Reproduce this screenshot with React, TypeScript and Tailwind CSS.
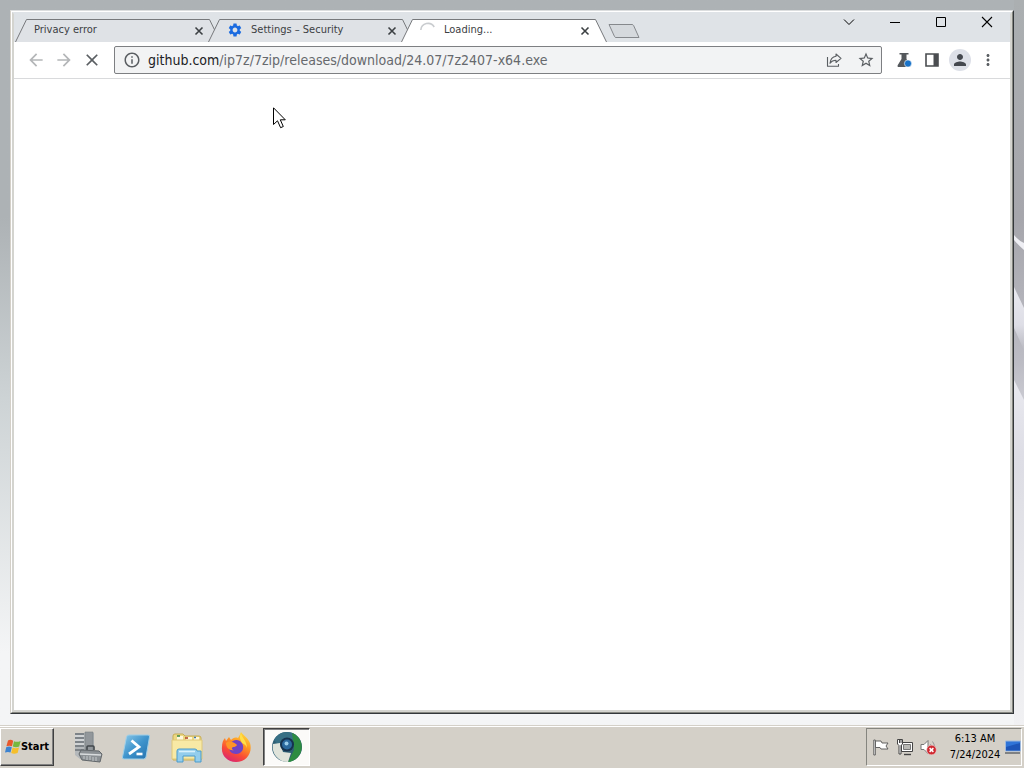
import React from "react";
import {
  MdArrowBack,
  MdArrowForward,
  MdClose,
  MdInfoOutline,
  MdMoreVert,
  MdPerson,
  MdSettings,
  MdStarBorder,
} from "react-icons/md";

type TabProps = {
  title: string;
  icon?: React.ReactNode;
  active?: boolean;
};

const Tab = ({ title, icon, active }: TabProps) => {
  return (
    <div className="relative -mr-3.5 flex h-6 w-[207px] items-center pr-[15px] pl-[19px]">
      <svg
        className="absolute inset-0 h-full w-full"
        viewBox="0 0 207 24"
        preserveAspectRatio="none"
      >
        <path
          d="M0.5 24 L11.5 1.5 H194.5 L205.5 24"
          fill={active ? "#ffffff" : "#dfe2e6"}
          stroke="#77797c"
        />
      </svg>
      {icon && <span className="relative mr-2 w-4">{icon}</span>}
      <span className="relative flex-1 truncate text-[11px] leading-4 text-[#3c4043]">
        {title}
      </span>
      <button aria-label={`Close ${title}`} className="relative text-[#3c4043]">
        <svg className="size-4" viewBox="0 0 16 16" stroke="currentColor" strokeWidth="1.6">
          <path d="M4.5 5.5 L11.5 12.5 M11.5 5.5 L4.5 12.5" />
        </svg>
      </button>
    </div>
  );
};

const Spinner = () => (
  <svg className="size-4" viewBox="0 0 16 16" fill="none" stroke="#c9cccf" strokeWidth="1.6">
    <path d="M0.8 8 A7.2 7.2 0 0 1 14.2 5" />
  </svg>
);

const WindowControls = () => {
  return (
    <div className="flex h-4 text-black">
      <button aria-label="Search tabs" className="flex w-[46px] items-center justify-center">
        <svg className="size-3" viewBox="0 0 12 12" fill="none" stroke="currentColor">
          <path d="M1 3.5 L6 8.5 L11 3.5" />
        </svg>
      </button>
      <button aria-label="Minimize" className="flex w-[46px] items-center justify-center">
        <svg className="size-3" viewBox="0 0 12 12" stroke="currentColor">
          <path d="M1 6.5 H11" />
        </svg>
      </button>
      <button aria-label="Maximize" className="flex w-[46px] items-center justify-center">
        <svg className="size-3" viewBox="0 0 12 12" fill="none" stroke="currentColor">
          <path d="M1.5 1.5 H10.5 V10.5 H1.5 Z" />
        </svg>
      </button>
      <button aria-label="Close" className="flex w-[46px] items-center justify-center">
        <svg className="size-3" viewBox="0 0 12 12" stroke="currentColor" strokeWidth="1.1">
          <path d="M1 1 L11 11 M11 1 L1 11" />
        </svg>
      </button>
    </div>
  );
};

const TabStrip = () => {
  return (
    <div className="flex h-7 justify-between bg-[#dfe3e7]">
      <div className="flex items-end pl-px">
        <Tab title="Privacy error" />
        <Tab title="Settings – Security" icon={<MdSettings className="size-4 text-[#1a6be0]" />} />
        <Tab title="Loading..." icon={<Spinner />} active />
        <button aria-label="New tab" className="ml-3.5 mb-1">
          <svg
            className="h-3.5 w-8"
            viewBox="0 0 32 14"
            fill="#d5d9dd"
            stroke="#85888c"
            strokeLinejoin="round"
          >
            <path d="M1 0.5 H24 Q25 0.5 25.6 1.5 L31 13.5 H8 Q7 13.5 6.5 12.5 Z" />
          </svg>
        </button>
      </div>
      <WindowControls />
    </div>
  );
};

const Toolbar = () => {
  return (
    <div className="flex h-[37px] items-center border-b border-[#d9dadc] pr-2 pl-2 text-[#5a5e62]">
      <button aria-label="Back" className="flex w-7 justify-center text-[#b4b6b8]">
        <MdArrowBack className="size-5" />
      </button>
      <button aria-label="Forward" className="flex w-7 justify-center text-[#b4b6b8]">
        <MdArrowForward className="size-5" />
      </button>
      <button aria-label="Stop" className="flex w-7 justify-center">
        <MdClose className="size-5" />
      </button>
      <div className="ml-2 flex h-7 flex-1 items-center rounded-xs border border-[#7d7f82] bg-[#f2f3f4] pr-1.5 pl-2">
        <MdInfoOutline className="size-[18px]" />
        <div className="relative ml-[7px] h-5 flex-1 text-sm leading-5">
          <input
            aria-label="Address"
            className="w-full bg-transparent text-transparent caret-transparent outline-none"
            defaultValue="github.com/ip7z/7zip/releases/download/24.07/7z2407-x64.exe"
          />
          <div aria-hidden="true" className="pointer-events-none absolute inset-0 truncate text-[#66696d]">
            <span className="text-[#202124]">github.com</span>
            /ip7z/7zip/releases/download/24.07/7z2407-x64.exe
          </div>
        </div>
        <button aria-label="Share" className="mr-[15px]">
          <svg
            className="size-4"
            viewBox="0 0 16 16"
            fill="none"
            stroke="currentColor"
            strokeWidth="1.1"
            strokeLinejoin="round"
          >
            <path d="M1.5 5 V14.3 H12.5 V12" />
            <path d="M10 2 L15 6.3 L10 10.5 V8.3 C7.5 8.3 5.6 9 4 11.3 C4.4 7.5 6.5 4.8 10 4.3 Z" />
          </svg>
        </button>
        <button aria-label="Bookmark">
          <MdStarBorder className="size-[18px]" />
        </button>
      </div>
      <div className="ml-2 flex">
        <button aria-label="Experiments" className="flex w-7 items-center justify-center">
          <svg className="size-4" viewBox="0 0 16 16">
            <path d="M3.5 1 H12.5 V2.6 H10.5 V7 L14 13 Q14.6 15 13 15 H3 Q0.8 15 1.8 13 L5.5 7 V2.6 H3.5 Z" fill="#54585c" />
            <circle cx="12" cy="11.5" r="3.6" fill="#1a73c8" stroke="#fff" strokeWidth="0.6" />
          </svg>
        </button>
        <button aria-label="Side panel" className="flex w-7 items-center justify-center">
          <svg className="size-4" viewBox="0 0 16 16">
            <path d="M2 2 H14 V14 H2 Z" fill="none" stroke="#4a4d50" strokeWidth="1.6" />
            <path d="M9.5 2 H14 V14 H9.5 Z" fill="#4a4d50" />
          </svg>
        </button>
        <button aria-label="Profile" className="flex w-7 items-center justify-center">
          <span className="flex size-[22px] items-center justify-center rounded-full bg-[#dde0e8] text-[#44484f]">
            <MdPerson className="size-[18px]" />
          </span>
        </button>
        <button aria-label="Menu" className="flex w-7 items-center justify-center">
          <MdMoreVert className="size-[18px]" />
        </button>
      </div>
    </div>
  );
};

const MouseCursor = () => (
  <svg className="absolute top-[93px] left-[259px] h-6 w-4" viewBox="0 0 16 24" fill="#fff" stroke="#000">
    <path d="M0.5 0.8 V17.5 L4.5 13.8 L7.6 20.7 L10.3 19.5 L7.3 12.8 H12.3 Z" />
  </svg>
);

const BrowserWindow = () => {
  return (
    <div className="relative flex flex-1 flex-col border border-t-[#dcdedf] border-r-[#33373a] border-b-[#33373a] border-l-[#d4d0c8]">
      <div className="flex flex-1 flex-col border border-t-white border-r-[#85867f] border-b-[#85867f] border-l-white">
        <div className="flex flex-1 flex-col border-2 border-[#d4d4cf] border-t-[#dfe3e7] bg-white">
          <div className="relative flex flex-1 flex-col">
            <TabStrip />
            <Toolbar />
            <main className="flex-1 bg-white" />
            <MouseCursor />
          </div>
        </div>
      </div>
    </div>
  );
};

// light streaks of the wallpaper, visible right of the window
const WallpaperStreaks = () => (
  <svg
    className="absolute inset-y-0 right-0 h-full w-2.5"
    viewBox="0 0 10 725"
    preserveAspectRatio="none"
  >
    <defs>
      <linearGradient id="base" x1="0" y1="0" x2="0" y2="1">
        <stop offset="0" stopColor="#abafb1" />
        <stop offset="0.3" stopColor="#a6a6ac" />
        <stop offset="0.5" stopColor="#bcbcc4" />
        <stop offset="0.62" stopColor="#dcdce3" />
        <stop offset="1" stopColor="#f1f1f3" />
      </linearGradient>
      <linearGradient id="streak" x1="0" y1="0" x2="0" y2="1">
        <stop offset="0" stopColor="#e9e9ef" />
        <stop offset="0.6" stopColor="#dedee6" />
        <stop offset="1" stopColor="#dedee6" stopOpacity="0" />
      </linearGradient>
    </defs>
    <path d="M0 0 H10 V725 H0 Z" fill="url(#base)" />
    <path d="M0 235 Q5 241 10 243 V250 Q5 246 0 240 Z" fill="#efeff4" />
    <path d="M0 287 L10 308 V350 L0 328 Z" fill="url(#streak)" />
    <path d="M0 380 L10 400 V500 H0 Z" fill="url(#streak)" />
  </svg>
);

const ServerManagerIcon = () => (
  <svg className="size-8" viewBox="0 0 32 32">
    <path d="M3 2 H22 V23 L17 28 H8 L3 24 Z" fill="#b4b8bb" />
    <path d="M13 1 H21 V21 H13 Z" fill="#92979b" stroke="#777c80" strokeWidth="0.6" />
    <path d="M3 3 H12 M3 7 H12 M3 11 H12 M3 15 H12 M3 19 H12" stroke="#7d8388" strokeWidth="2" />
    <path d="M3 5 H12 M3 9 H12 M3 13 H12" stroke="#eceeef" />
    <path d="M15 19 V16 Q15 15 16 15 H21 Q22 15 22 16 V19" fill="none" stroke="#43484c" strokeWidth="1.6" />
    <path d="M9 19 L27 20 L30 23 L28 31 L10 29 L7 23 Z" fill="#8b9094" stroke="#62676b" />
    <path d="M8 23 L29 24" stroke="#d9dcde" strokeWidth="1.4" />
    <path d="M12 25 V28 M15 25 V29 M18 25 V29 M21 26 V30 M24 26 V30" stroke="#c5c9cb" />
  </svg>
);

const PowerShellIcon = () => (
  <svg className="size-8" viewBox="0 0 32 32">
    <defs>
      <linearGradient id="ps" x1="0" y1="0" x2="1" y2="1">
        <stop offset="0" stopColor="#8ccaea" />
        <stop offset="0.5" stopColor="#3f94cc" />
        <stop offset="1" stopColor="#2470ad" />
      </linearGradient>
    </defs>
    <path
      d="M8 4 H27 Q29 4 28.5 6 L25 26 Q24.6 28 22.5 28 H3 Q1 28 1.5 26 L5.5 6 Q6 4 8 4 Z"
      fill="url(#ps)"
      stroke="#9fcfe8"
    />
    <path d="M10.5 9.5 L18 16 L8 23" fill="none" stroke="#fff" strokeWidth="2.8" />
    <path d="M15.5 23 H21.5" stroke="#fff" strokeWidth="2.6" />
  </svg>
);

const ExplorerIcon = () => (
  <svg className="size-8" viewBox="0 0 32 32">
    <path d="M2 5 Q2 3 4 3 H12 L14 5 H28 Q30 5 30 7 V29 H2 Z" fill="#ecd883" stroke="#c7ad55" />
    <path d="M6 5 H12 V9 H6 Z M15 6 H21 V9 H15 Z M23 6 H28 V9 H23 Z" fill="#fff8dc" />
    <path d="M6 5 H9" stroke="#3f8b45" strokeWidth="1.6" />
    <path d="M14 7 H17" stroke="#b5492c" strokeWidth="1.6" />
    <path d="M23 6.5 H25" stroke="#3b77b5" strokeWidth="1.6" />
    <path d="M1 9 H31 V28 H1 Z" fill="#f8e9a5" stroke="#dfc878" />
    <path
      d="M6 31 V20 Q6 18 8 18 H24 Q26 18 26 20 H30 V31 H24 V25 H12 V31 Z"
      fill="#93cdec"
      stroke="#4a9bcb"
    />
    <path d="M8 20.5 H24" stroke="#d9f1fc" strokeWidth="1.6" />
  </svg>
);

const FirefoxIcon = () => (
  <svg className="size-8" viewBox="0 0 32 32">
    <defs>
      <linearGradient id="fox" x1="0.8" y1="0" x2="0.3" y2="1">
        <stop offset="0" stopColor="#ffdf3d" />
        <stop offset="0.4" stopColor="#ff9324" />
        <stop offset="0.7" stopColor="#fa4b36" />
        <stop offset="1" stopColor="#d92672" />
      </linearGradient>
    </defs>
    <path
      d="M21 1 C23 4 28 7 30 12 C33 22 26 31 16 31 C7 31 1 24 2 16 C2 12 3 9 5 7 L6 10 L9 6 L11 9 C13 7 15 6 18 7 C19 5 20 4 21 1 Z"
      fill="url(#fox)"
    />
    <path d="M10 13 C13 8 19 8 22 12 C25 17 22 23 16 23 C12 23 9 20 9 17 Z" fill="#7044c4" />
    <path d="M6 12 C9 9 13 11 16 13 C18 14 16 16 13 16 C11 17 12 19 14 19 C10 20 6 17 6 12 Z" fill="#ff9527" />
    <path d="M21 2 C22 7 27 10 27 17 C26 14 24 13 22 12 C20 8 19 6 21 2 Z" fill="#ffe04a" />
  </svg>
);

const ChromiumIcon = () => (
  <svg className="size-8" viewBox="0 0 32 32">
    <circle cx="16" cy="16" r="15" fill="#2e5f74" />
    <path d="M16 1 A15 15 0 0 1 30 11 H17 L8 15 L3 9 A15 15 0 0 1 16 1 Z" fill="#376f84" />
    <path d="M21 2 A15 15 0 0 1 17 31 L23 19 L22 9 Z" fill="#2d8b42" />
    <path d="M2 13 L9 12 L12 21 L20 22 L17 31 A15 15 0 0 1 2 13 Z" fill="#dfe3da" />
    <circle cx="16" cy="13.5" r="7" fill="#16324f" />
    <circle cx="16" cy="13.5" r="5" fill="#2b689d" />
    <circle cx="15.5" cy="12.5" r="2" fill="#9accea" />
  </svg>
);

const WindowsFlag = () => (
  <svg className="size-4" viewBox="0 0 16 16">
    <path d="M3 1.5 Q5.5 0 8.2 1.8 L7 7.3 Q4.5 6 1.4 7.3 Z" fill="#e8582b" />
    <path d="M9 2.2 Q12 3.6 15.6 2 L14.2 7.6 Q11 9 7.8 7.6 Z" fill="#76b83f" />
    <path d="M1.2 8.2 Q4.3 7 6.8 8.3 L5.5 13.6 Q3 12.2 0 13.6 Z" fill="#3d83d0" />
    <path d="M7.6 8.6 Q10.6 9.9 14 8.5 L12.6 14 Q9 15.4 6.2 14 Z" fill="#f5bf2c" />
  </svg>
);

const Tray = () => {
  return (
    <div className="mr-0.5 flex items-center border border-t-[#85857f] border-r-white border-b-white border-l-[#85857f] pl-1">
      <button aria-label="Action Center" className="w-6">
        <svg className="size-5" viewBox="0 0 20 20" fill="#fff" stroke="#555" strokeWidth="0.9">
          <path d="M4.5 4 H10 L11 6 H17 L15 9 L17 12 H10 L9 10.5 H4.5 Z" />
          <path d="M2.8 3 H4.3 V18 H2.8 Z" />
        </svg>
      </button>
      <button aria-label="Network" className="w-6">
        <svg className="size-5" viewBox="0 0 20 20" fill="#fff" stroke="#444">
          <path d="M6.5 5.5 H17.5 V14.5 H6.5 Z" />
          <path d="M8.5 7.5 H15.5 V12.5 H8.5 Z" fill="#b9b9b5" stroke="#777" />
          <path d="M9 17.5 H16" strokeWidth="1.4" />
          <path d="M2.5 2.5 H7.5 V7 L6 8.5 V17 H4 V8.5 L2.5 7 Z" />
          <path d="M4.5 2 V6 M6 2 V6" />
        </svg>
      </button>
      <button aria-label="Volume" className="w-6">
        <svg className="size-5" viewBox="0 0 20 20">
          <path d="M2 7.5 H5 L9 3.5 V16.5 L5 12.5 H2 Z" fill="#fff" stroke="#777" />
          <path d="M11.5 7 Q13 10 11.5 13 M13.5 4.5 Q15.5 7 15.5 10" fill="none" stroke="#999" />
          <circle cx="12.5" cy="13" r="4.8" fill="#cf2830" stroke="#f3c9c9" strokeWidth="0.6" />
          <path d="M10.6 11.1 L14.4 14.9 M14.4 11.1 L10.6 14.9" stroke="#fff" strokeWidth="1.5" />
        </svg>
      </button>
      <div className="ml-1 w-14 text-center text-[11px] leading-4 text-black">
        <div>6:13 AM</div>
        <div>7/24/2024</div>
      </div>
      <button aria-label="Show desktop" className="ml-0.5">
        <svg className="h-5 w-4" viewBox="0 0 16 20">
          <path d="M0.5 4 H15.5 V14 H0.5 Z" fill="#2f74d8" stroke="#9db8dc" />
          <path d="M1 10 L15 6 V13.5 H1 Z" fill="#1d55b8" />
          <path d="M0 16 H15" stroke="#65686c" strokeWidth="1.5" />
        </svg>
      </button>
    </div>
  );
};

const Taskbar = () => {
  return (
    <footer className="flex h-[43px] border-t border-[#d4d0c8] bg-[#d4d0c8]">
      <div className="flex flex-1 border-t border-white pt-px pb-0.5">
        <button className="flex w-[54px] items-center justify-center border border-t-white border-r-[#404040] border-b-[#404040] border-l-white text-[11px] font-bold text-black shadow-[inset_-1px_-1px_0_#808080]">
          <WindowsFlag />
          Start
        </button>
        <div className="ml-2.5 flex flex-1">
          <button aria-label="Server Manager" className="flex w-12 items-center justify-center">
            <ServerManagerIcon />
          </button>
          <button aria-label="PowerShell" className="flex w-[50px] items-center justify-center">
            <PowerShellIcon />
          </button>
          <button aria-label="Explorer" className="flex w-[50px] items-center justify-center">
            <ExplorerIcon />
          </button>
          <button aria-label="Firefox" className="flex w-12 items-center justify-center">
            <FirefoxIcon />
          </button>
          <button
            aria-label="Chromium"
            className="ml-[3px] flex w-[47px] items-center justify-center border border-t-[#404040] border-r-white border-b-white border-l-[#404040] bg-[#fbfaf8] shadow-[inset_1px_1px_0_#808080]"
          >
            <ChromiumIcon />
          </button>
        </div>
        <Tray />
      </div>
    </footer>
  );
};

export default function App() {
  return (
    <div className="flex min-h-screen flex-col font-['DejaVu_Sans_Condensed','Noto_Sans',sans-serif]">
      <div className="relative flex flex-1 flex-col bg-linear-to-b from-[#adb2b5] from-30% via-[#cdd3d5] via-55% to-[#f4f5f6] to-90% px-2.5 pt-2.5 pb-[11px]">
        <WallpaperStreaks />
        <BrowserWindow />
      </div>
      <Taskbar />
    </div>
  );
}
